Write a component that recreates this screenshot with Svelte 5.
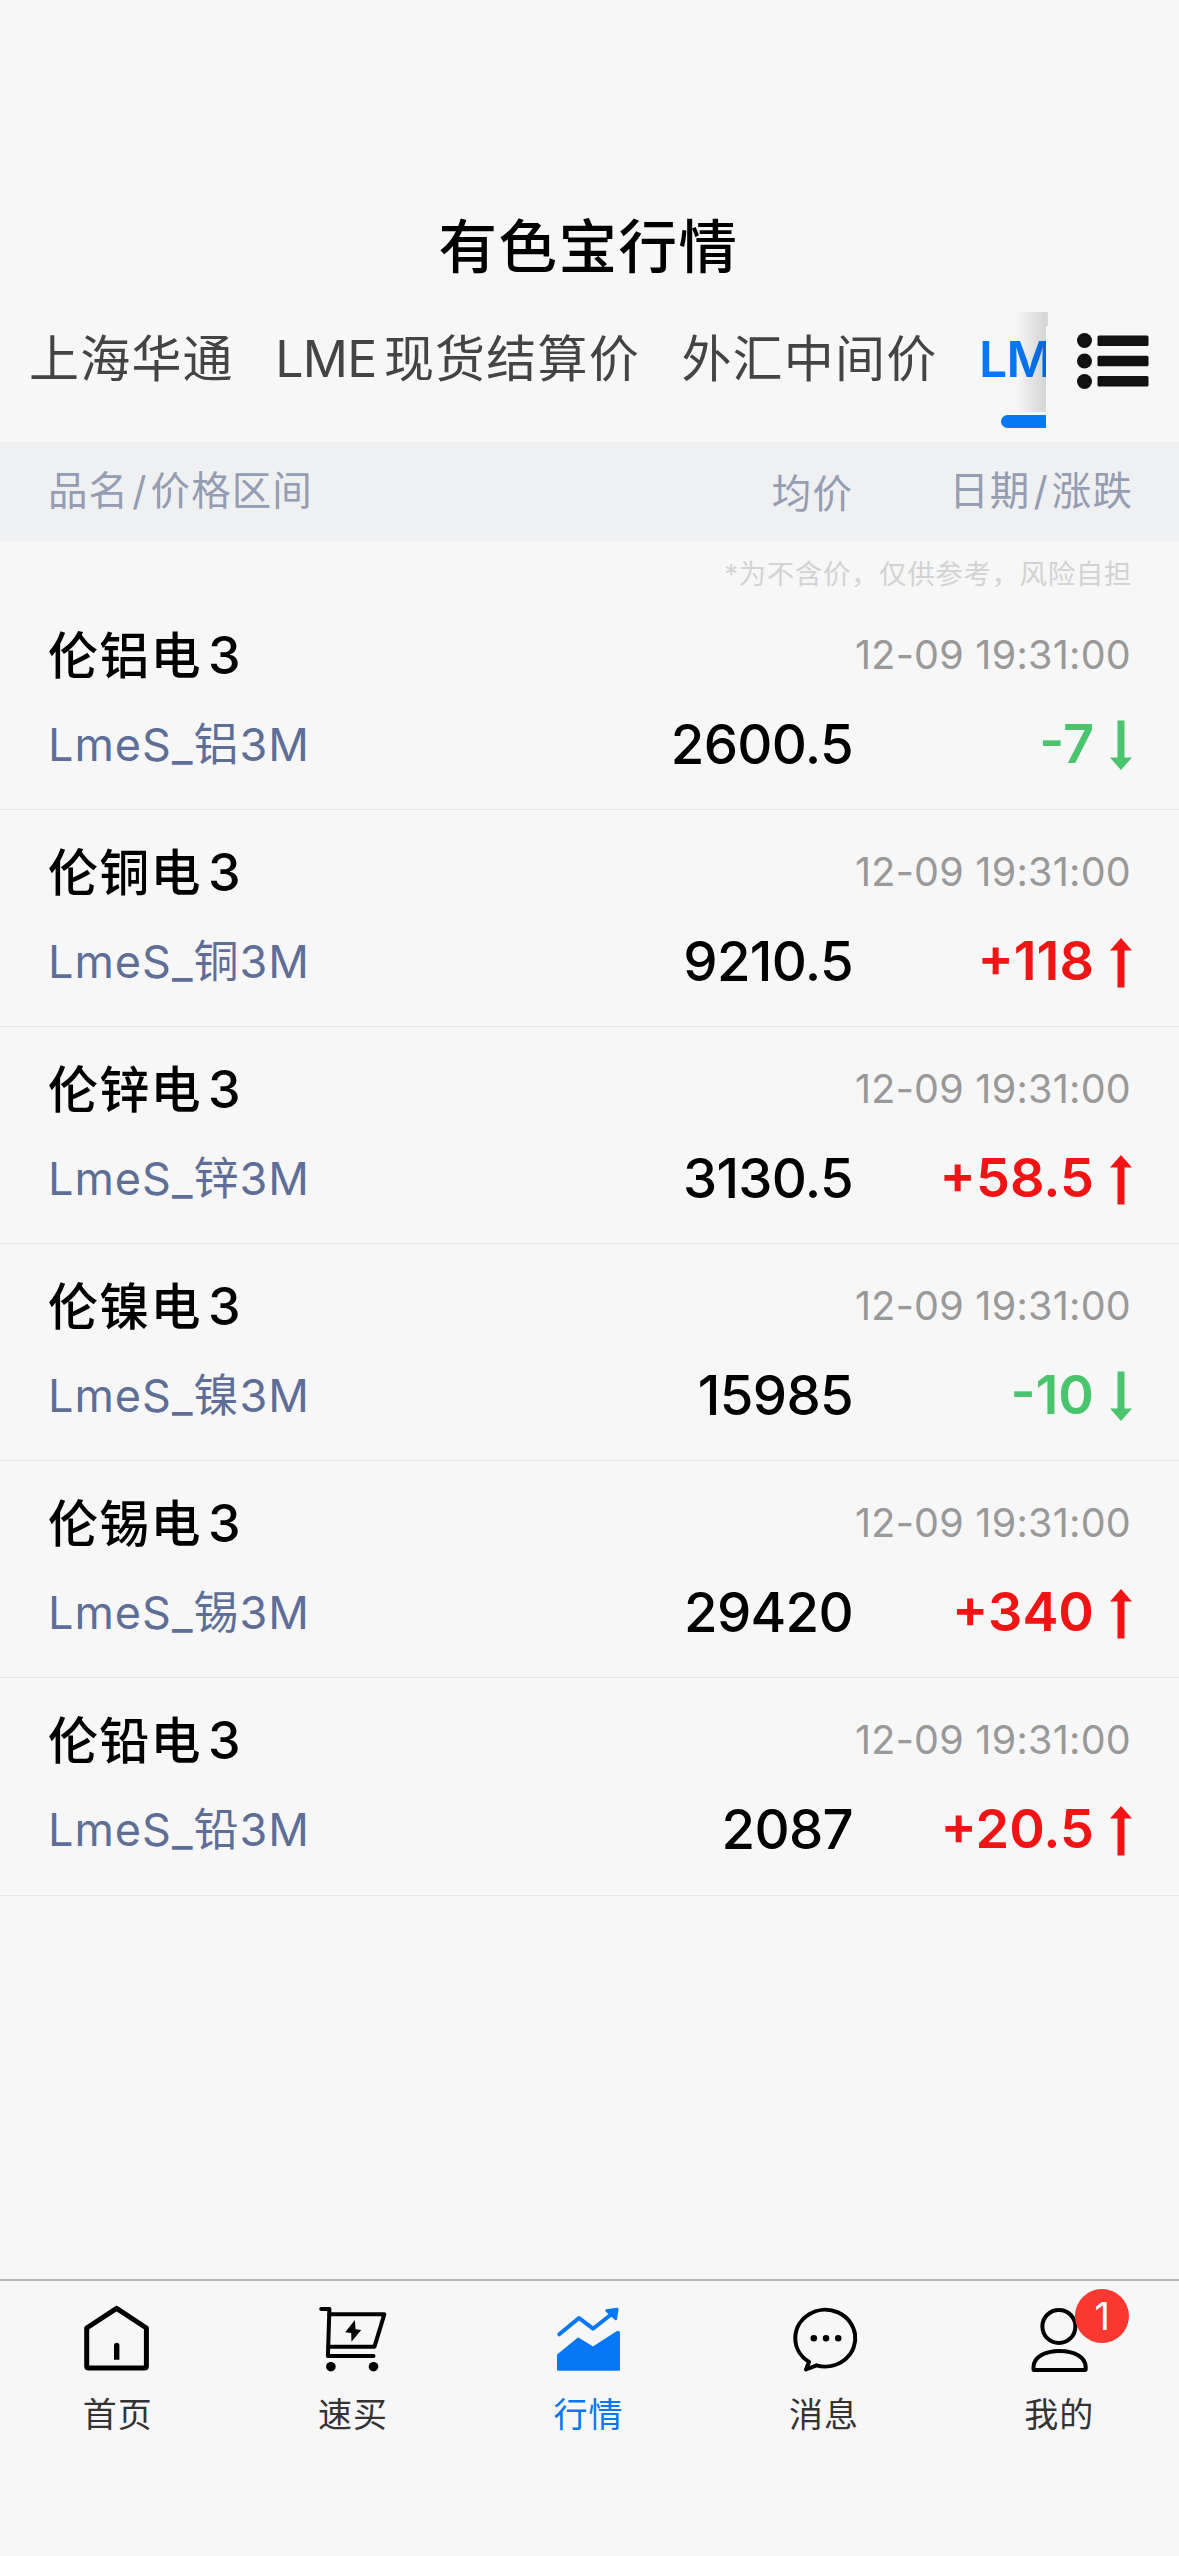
<script lang="ts">
	type Quote = { metal: string; price: string; change: string };

	const tabs = ['上海华通', 'LME现货结算价', '外汇中间价', 'LME'];
	let activeTab = $state(3);

	const time = '12-09 19:31:00';
	const quotes: Quote[] = [
		{ metal: '铝', price: '2600.5', change: '-7' },
		{ metal: '铜', price: '9210.5', change: '+118' },
		{ metal: '锌', price: '3130.5', change: '+58.5' },
		{ metal: '镍', price: '15985', change: '-10' },
		{ metal: '锡', price: '29420', change: '+340' },
		{ metal: '铅', price: '2087', change: '+20.5' }
	];

	const navItems = [
		{ id: 'home', label: '首页' },
		{ id: 'cart', label: '速买' },
		{ id: 'market', label: '行情' },
		{ id: 'message', label: '消息' },
		{ id: 'user', label: '我的', badge: 1 }
	];
	let activeNav = $state('market');
</script>

<div class="screen">
	<h1 class="title">有色宝行情</h1>

	<div class="tab-row">
		<div class="tabs">
			{#each tabs as tab, i}
				<button class="tab" class:active={activeTab === i} onclick={() => (activeTab = i)}>
					{#if tab.startsWith('LME')}<span class="latin">LME</span>{tab.slice(3)}{:else}{tab}{/if}
				</button>
			{/each}
			<span class="fade"></span>
		</div>
		<button class="menu" aria-label="全部分类">
			<svg viewBox="0 0 72 56" width="72" height="56" fill="#111">
				<circle cx="7.5" cy="7.5" r="7.5" />
				<circle cx="7.5" cy="28" r="7.5" />
				<circle cx="7.5" cy="48.5" r="7.5" />
				<rect x="20.5" y="2.5" width="51" height="10.4" rx="1.5" />
				<rect x="20.5" y="22.8" width="51" height="10.4" rx="1.5" />
				<rect x="20.5" y="43.1" width="51" height="10.4" rx="1.5" />
			</svg>
		</button>
	</div>

	<div class="list-head">
		<span class="col-name">品名<i>/</i>价格区间</span>
		<span class="col-price">均价</span>
		<span class="col-change">日期<i>/</i>涨跌</span>
	</div>

	<p class="notice">*为不含价，仅供参考，风险自担</p>

	<div class="list">
		{#each quotes as q (q.metal)}
			{@const down = q.change.startsWith('-')}
			<div class="quote">
				<div class="line top">
					<span class="name">伦{q.metal}电<b>3</b></span>
					<span class="time">{time}</span>
				</div>
				<div class="line">
					<span class="code">LmeS_{q.metal}3M</span>
					<span class="price">{q.price}</span>
					<span class="change" class:down>
						{q.change}
						<svg viewBox="0 0 22 50" width="22" height="50" fill="currentColor">
							<path d="M11 0L22 12.5H14.5V49.5H7.5V12.5H0Z" />
						</svg>
					</span>
				</div>
			</div>
		{/each}
	</div>

	<nav class="nav">
		{#each navItems as item (item.id)}
			<button class="nav-item" class:active={activeNav === item.id} onclick={() => (activeNav = item.id)}>
				<span class="icon">
					<svg viewBox="0 0 72 72" width="72" height="72" fill="none" stroke="currentColor" stroke-width="4" stroke-linejoin="round" stroke-linecap="round">
						{#if item.id === 'home'}
							<path d="M34.6 6.4L64.4 26V64Q64.4 66 62.4 66H6.7Q4.7 66 4.7 64V26Z" stroke-width="5" />
							<path d="M32 57.7V43.5a2.7 2.7 0 0 1 5.4 0V57.7Z" fill="currentColor" stroke="none" />
						{:else if item.id === 'cart'}
							<path d="M4.2 7H12.4L10.9 54H56.5" />
							<path d="M12.4 12.3H67.3L57.5 44.7H11.5" />
							<path d="M37.9 18L28.2 30.3L34.2 31L34.5 39.7L44.2 28L38.5 27.3Z" fill="currentColor" stroke="none" />
							<circle cx="13.9" cy="64.7" r="4.8" fill="currentColor" stroke="none" />
							<circle cx="56.5" cy="64.7" r="4.8" fill="currentColor" stroke="none" />
						{:else if item.id === 'market'}
							<path d="M5 53L25.3 36.5L40 45.5L64.5 29.8L66 30.5V67.8H5Z" fill="currentColor" stroke-width="2" />
							<path d="M6.3 32.3L26 16L40 26.7L60 11" />
							<path d="M53.5 8.5L64.3 7L62.8 17Z" fill="currentColor" stroke-width="2.5" />
						{:else if item.id === 'message'}
							<path d="M21 60A30 28.4 0 1 1 28.5 63.3L18 67.5Z" />
							<path d="M25.8 36.3h0.01M38 36.3h0.01M50.2 36.3h0.01" stroke-width="6.5" />
						{:else}
							<circle cx="35.9" cy="24.4" r="16.5" />
							<path d="M11 68Q10.5 68 10.5 67V65C10.5 55 22 48.9 36.6 48.9S62.7 55 62.7 65V67Q62.7 68 62 68Z" />
						{/if}
					</svg>
					{#if item.badge}
						<span class="badge">{item.badge}</span>
					{/if}
				</span>
				<span class="label">{item.label}</span>
			</button>
		{/each}
	</nav>
</div>

<style>
	:global(body) {
		margin: 0;
		background: #f7f7f7;
	}

	.screen {
		display: flex;
		flex-direction: column;
		width: 1179px;
		height: 2556px;
		overflow: hidden;
		background: #f7f7f7;
		color: #000;
		font-family: Inter, 'Noto Sans CJK SC', sans-serif;
	}

	button {
		padding: 0;
		border: none;
		background: none;
		font: inherit;
		color: inherit;
	}

	.title {
		margin: 207px 0 0;
		height: 79px;
		padding-right: 2px;
		line-height: 80px;
		font-size: 58.5px;
		font-weight: 500;
		letter-spacing: 1.5px;
		text-align: center;
	}

	.tab-row {
		position: relative;
		display: flex;
		height: 156px;
	}

	.tab-row::after {
		content: '';
		position: absolute;
		left: 1046px;
		top: 26px;
		width: 2px;
		height: 14px;
		background: #d9d9d9;
	}

	.tabs {
		position: relative;
		display: flex;
		gap: 41.5px;
		width: 1017px;
		padding-left: 29px;
		overflow: hidden;
	}

	.tab {
		position: relative;
		flex: none;
		height: 144px;
		line-height: 146px;
		font-size: 50px;
		letter-spacing: 1.2px;
		color: #444;
		white-space: nowrap;
	}

	.latin {
		margin-right: 7.5px;
		letter-spacing: -0.8px;
	}

	.tab.active {
		font-weight: 600;
		color: #0577f7;
	}

	.tab.active::after {
		content: '';
		position: absolute;
		left: 22px;
		bottom: 2px;
		width: 150px;
		height: 13px;
		border-radius: 7px;
		background: #0577f7;
	}

	.fade {
		position: absolute;
		right: 0;
		top: 26px;
		width: 30px;
		height: 100px;
		background: linear-gradient(to right, rgba(0, 0, 0, 0), rgba(0, 0, 0, 0.14));
	}

	.menu {
		height: 56px;
		margin: 47px 0 0 31px;
	}

	svg {
		display: block;
	}

	.list-head {
		display: flex;
		height: 99px;
		line-height: 99px;
		background: #eff0f2;
		font-size: 39.5px;
		letter-spacing: 1.1px;
		color: #949db3;
	}

	.list-head i {
		margin: 0 3px;
		font-style: normal;
	}

	.col-name {
		width: 501px;
		padding-left: 48px;
	}

	.col-price {
		width: 304px;
		padding-top: 3px;
		text-align: right;
	}

	.col-change {
		width: 280px;
		text-align: right;
	}

	.notice {
		height: 38px;
		margin: 0;
		padding: 14px 47px 0 0;
		line-height: 38px;
		font-size: 27.5px;
		letter-spacing: 0.6px;
		text-align: right;
		color: #d3d3d3;
	}

	.quote {
		box-sizing: border-box;
		height: 217.1px;
		padding: 17px 47px 0 48px;
		border-bottom: 1px solid #e6e6e6;
	}

	.line {
		display: flex;
		align-items: center;
		height: 89px;
	}

	.top {
		justify-content: space-between;
	}

	.name {
		padding-bottom: 6px;
		font-size: 50px;
		font-weight: 500;
		letter-spacing: 1.3px;
	}

	.name b {
		margin-left: 6px;
		font-size: 52px;
		font-weight: 500;
	}

	.time {
		margin-right: 1px;
		font-size: 39.5px;
		letter-spacing: 0.25px;
		color: #999;
	}

	.code {
		width: 400px;
		padding-bottom: 5px;
		font-size: 45px;
		letter-spacing: 1px;
		color: #5d6f98;
	}

	.price {
		width: 405px;
		font-size: 54.5px;
		font-weight: 500;
		letter-spacing: -0.7px;
		text-align: right;
	}

	.change {
		display: flex;
		flex: 1;
		align-items: center;
		justify-content: flex-end;
		gap: 16px;
		font-size: 54px;
		font-weight: 600;
		color: #f01414;
	}

	.change.down {
		color: #4bc46e;
	}

	.change svg {
		margin-top: 4px;
	}

	.down svg {
		margin-top: 2px;
		transform: rotate(180deg);
	}

	.nav {
		display: flex;
		height: 275px;
		margin-top: auto;
		padding-right: 2px;
		border-top: 2px solid #b4b4b4;
	}

	.nav-item {
		display: flex;
		flex: 1;
		flex-direction: column;
		align-items: center;
		padding-top: 21px;
	}

	.icon {
		position: relative;
	}

	.label {
		margin-top: 16px;
		line-height: 50px;
		font-size: 34px;
		letter-spacing: 1px;
		color: #333;
	}

	.active .icon,
	.active .label {
		color: #0577f7;
	}

	.badge {
		position: absolute;
		left: 52px;
		top: -13px;
		width: 54px;
		height: 54px;
		border-radius: 50%;
		background: #fb382f;
		color: #fff;
		font-size: 38px;
		line-height: 54px;
		text-align: center;
	}
</style>
